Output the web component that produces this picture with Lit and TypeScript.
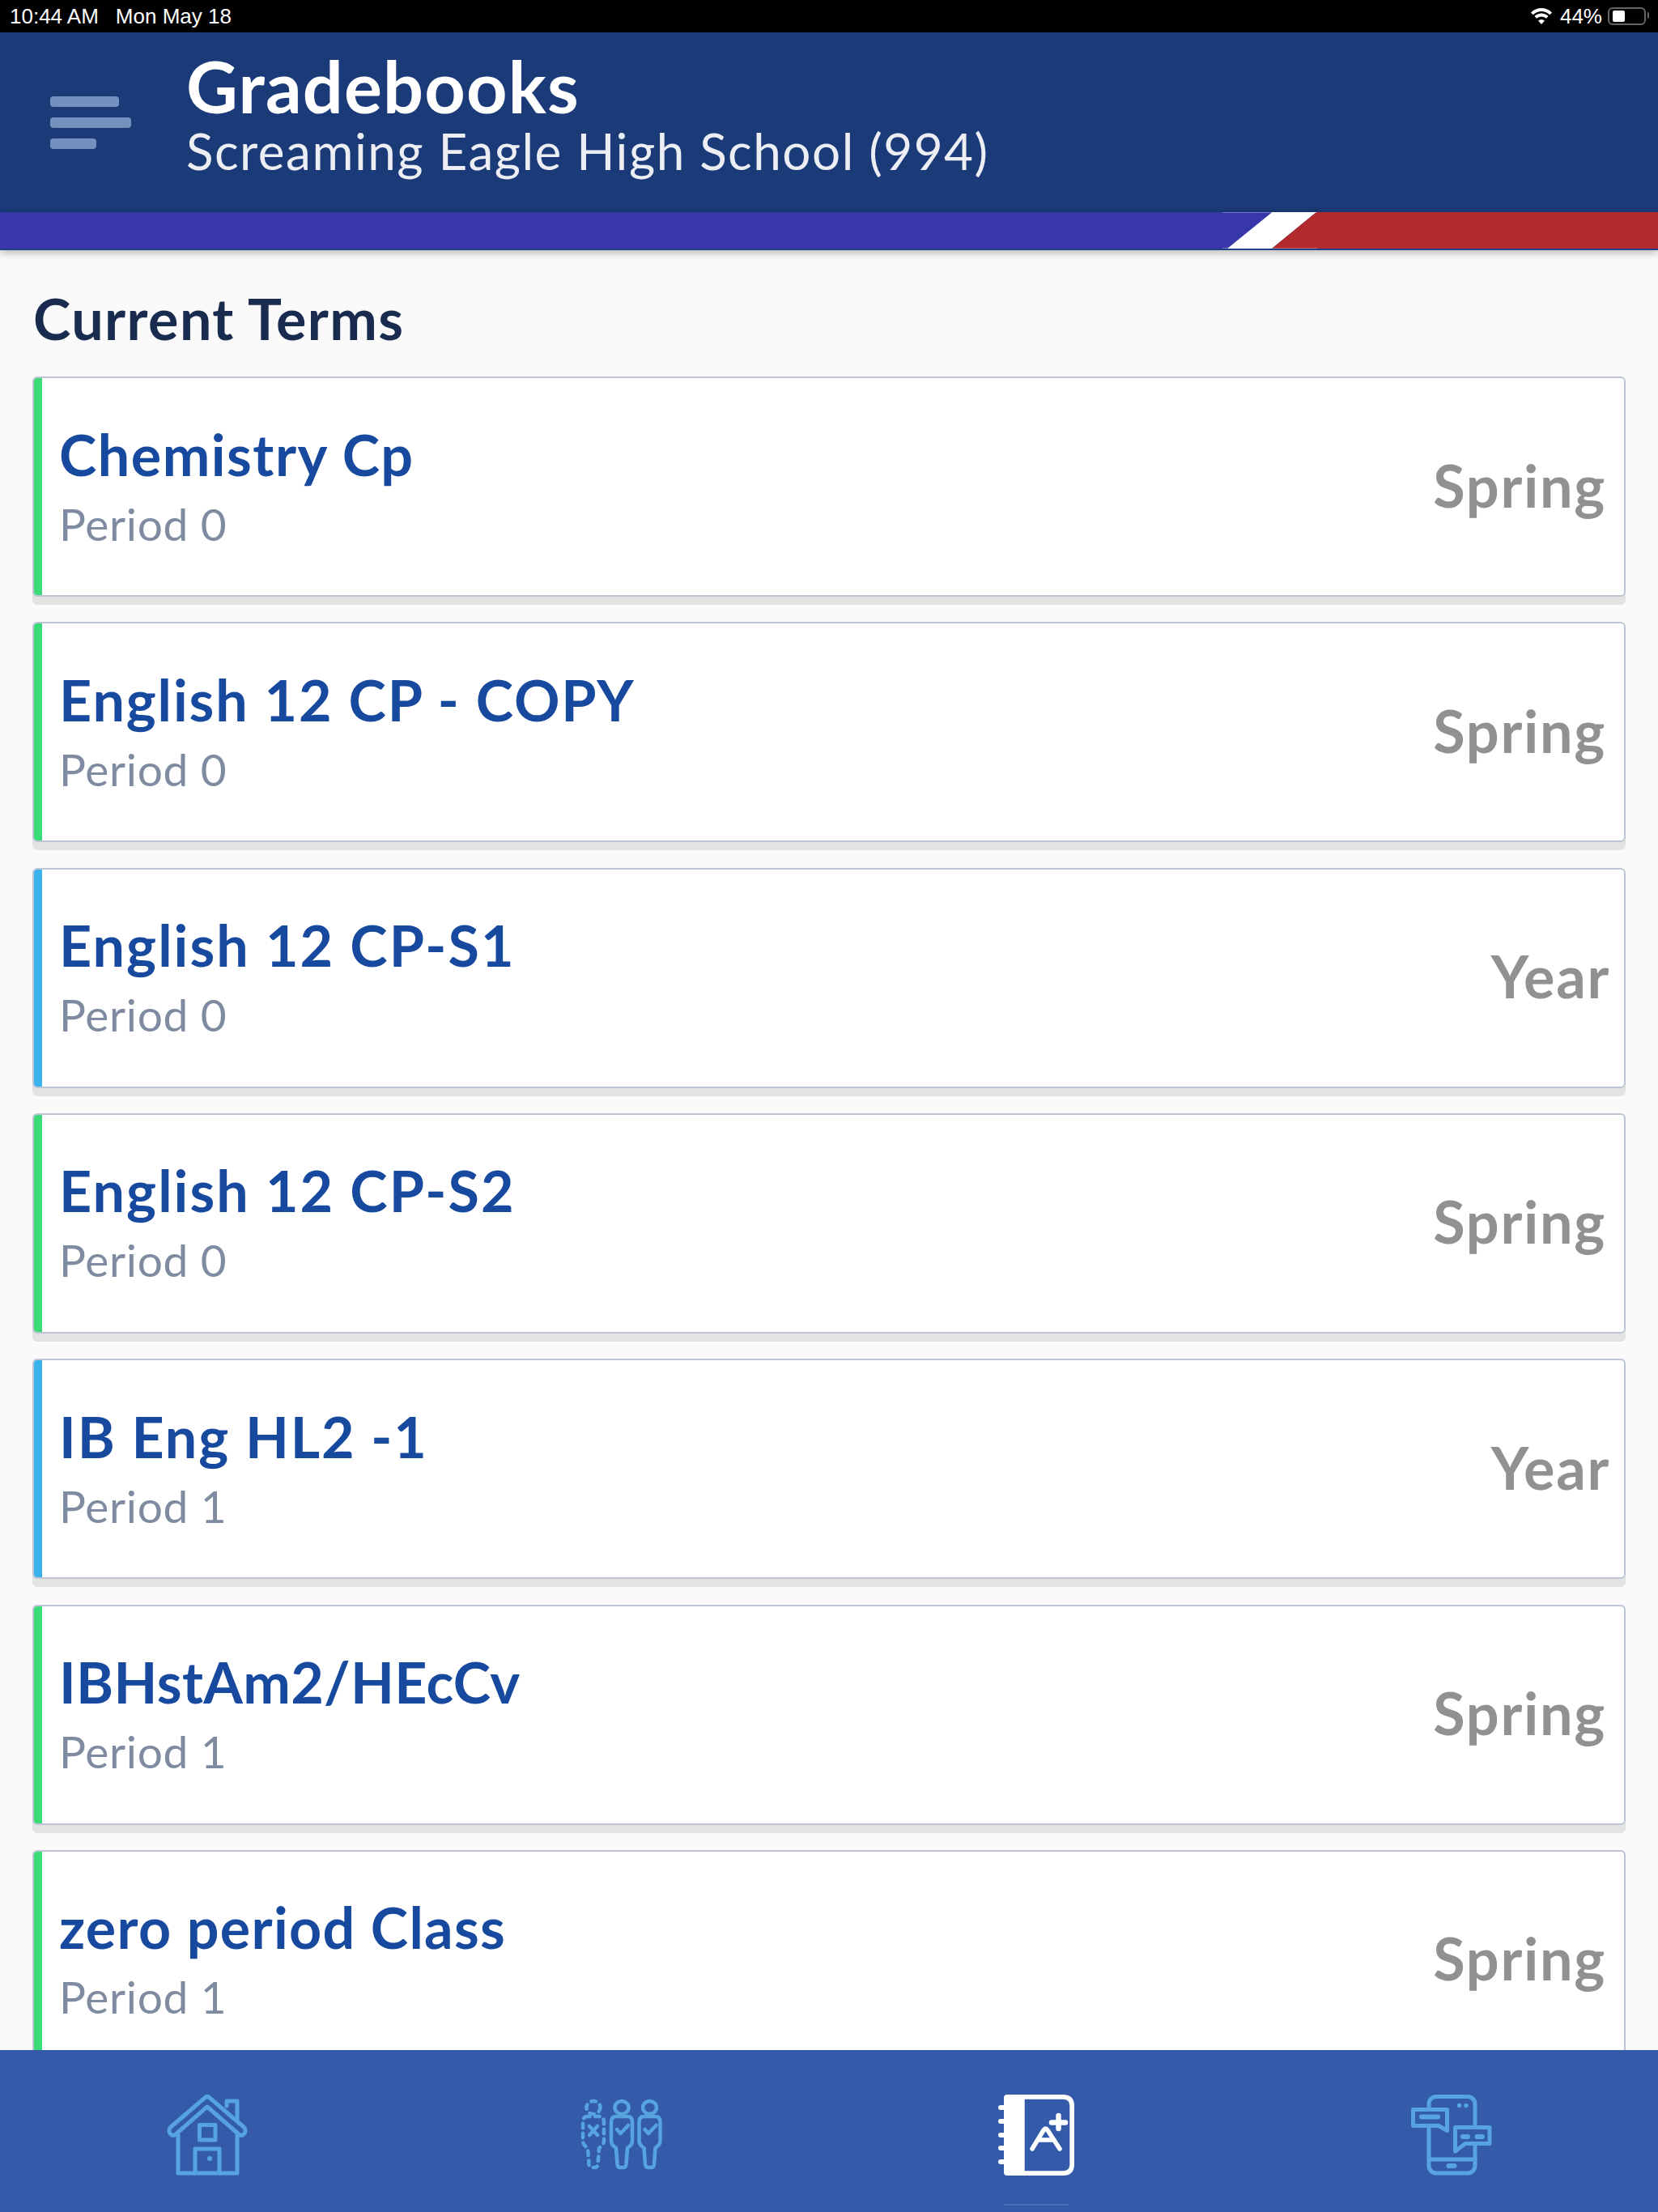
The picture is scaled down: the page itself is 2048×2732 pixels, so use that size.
import { LitElement, html, css, svg } from "lit";
import { customElement } from "lit/decorators.js";

const rows = [
  { name: "Chemistry Cp", track: 1.5, period: "Period 0", term: "Spring", kind: "spring" },
  { name: "English 12 CP - COPY", track: 1.9, period: "Period 0", term: "Spring", kind: "spring" },
  { name: "English 12 CP-S1", track: 2.07, period: "Period 0", term: "Year", kind: "year" },
  { name: "English 12 CP-S2", track: 2.07, period: "Period 0", term: "Spring", kind: "spring" },
  { name: "IB Eng HL2 -1", track: 1.87, period: "Period 1", term: "Year", kind: "year" },
  { name: "IBHstAm2/HEcCv", track: 0.33, period: "Period 1", term: "Spring", kind: "spring" },
  { name: "zero period Class", track: 1.3, period: "Period 1", term: "Spring", kind: "spring" },
];

const person = (dx: number) => svg`
  <g transform="translate(${dx} 0)">
    <ellipse cx="60" cy="26" rx="8.500" ry="8"/>
    <path d="M53 37 Q47 37 47 44 V67 Q47 72 53 76 L54.500 96 Q55 100 58 100 H62 Q65 100 65.500 96 L67 76 Q73 72 73 67 V44 Q73 37 67 37 Z"/>
  </g>`;

const iconHome = html`<svg class="icon" viewBox="0 0 120 120">
  <path d="M57 14 L15 50 Q10.500 55 15 59 Q18 62 21 59 L60 25 L99 59 Q102 62 105 59 Q109.500 55 105 50 L63 14 Q60 11 57 14 Z"/>
  <path d="M84 24 V18 H97 V41"/>
  <path d="M24 60 V107 H97 V60"/>
  <rect x="50.500" y="47.500" width="19.500" height="18.500"/>
  <path d="M45 107 V77 H75 V107"/>
  <circle class="solid" cx="63" cy="89" r="3"/>
</svg>`;

const iconPeople = html`<svg class="icon thin" viewBox="0 0 120 120">
  <g stroke-dasharray="5.500 6.500">${person(-35)}</g>
  <path d="M20 49 L30 60 M30 49 L20 60"/>
  ${person(0)}
  ${person(34.5)}
  <path d="M54 53 L58.500 58 L68 48"/>
  <path d="M88.500 53 L93 58 L102.500 48"/>
</svg>`;

const iconBook = html`<svg class="icon book" viewBox="0 0 120 120">
  <path fill-rule="evenodd" d="M24 10 H93 Q107 10 107 24 V96 Q107 110 93 110 H24 Q20 110 20 106 V14 Q20 10 24 10 Z M45.700 15.700 V104.300 H93 Q101.300 104.300 101.300 96 V24 Q101.300 15.700 93 15.700 Z"/>
  <g class="rings">
    <path d="M16 26 H21 M16 43 H21 M16 60 H21 M16 76 H21 M16 93 H21"/>
  </g>
  <path class="line" d="M55 77 L69 54 Q71.500 50 74 54 L89 77 M62 66 H82"/>
  <path class="line plus" d="M87.500 36 V52 M79 44.500 H96"/>
</svg>`;

const iconPhone = html`<svg class="icon" viewBox="0 0 120 120">
  <rect x="33" y="12.500" width="57" height="94.500" rx="9"/>
  <path d="M33 90 H90"/>
  <path class="fat" d="M57.500 98 H64.500"/>
  <circle class="solid" cx="70.500" cy="23.500" r="2.800"/>
  <circle class="solid" cx="79" cy="23.500" r="2.800"/>
  <path class="bg" d="M13.500 28.500 H55.500 V54.500 L45 48.500 H13.500 Z"/>
  <path class="fat" d="M24 37.500 H44"/>
  <path class="bg" d="M65.500 50.500 H108 V70.500 H78 L65.500 80 Z"/>
  <path class="fat" d="M75 62 H81 M92.500 62 H99"/>
</svg>`;

@customElement("app-root")
export class AppRoot extends LitElement {
  static styles = css`
    :host {
      display: flex;
      flex-direction: column;
      height: 2732px;
      overflow: hidden;
      background: #fafafa;
      font-family: "Lato", "Noto Sans", sans-serif;
    }
    .status {
      height: 40px;
      flex: none;
      background: #000;
      color: #fff;
      display: flex;
      align-items: center;
      justify-content: space-between;
      padding: 0 11px 0 12px;
      font: 26px "Liberation Sans", sans-serif;
    }
    .status-left { display: flex; gap: 21px; }
    .status-right { display: flex; align-items: center; gap: 7px; }
    .wifi { width: 26px; height: 20px; display: block; margin-right: 3px; }
    .battery {
      position: relative;
      width: 47px;
      height: 22px;
      box-sizing: border-box;
      border: 2px solid #666;
      border-radius: 6px;
      padding: 2px 4px;
      margin-right: 4px;
    }
    .battery::before {
      content: "";
      display: block;
      width: 15px;
      height: 14px;
      background: #fff;
      border-radius: 2px;
    }
    .battery::after {
      content: "";
      position: absolute;
      right: -6px;
      top: 4px;
      width: 2px;
      height: 8px;
      background: #666;
      border-radius: 0 2px 2px 0;
    }
    .header {
      height: 222px;
      flex: none;
      box-sizing: border-box;
      background: #1a3a78;
      display: flex;
      align-items: flex-start;
      padding: 20px 0 0 62px;
    }
    .menu {
      width: 168px;
      flex: none;
      display: flex;
      flex-direction: column;
      gap: 13px;
      padding-top: 59px;
    }
    .menu i { display: block; height: 13px; background: #7390bf; border-radius: 4px; }
    .menu i:nth-child(1) { width: 85px; }
    .menu i:nth-child(2) { width: 100px; }
    .menu i:nth-child(3) { width: 57px; }
    h1 {
      margin: 0;
      font-size: 88px;
      line-height: 93px;
      letter-spacing: 1.2px;
      font-weight: 700;
      color: #fff;
    }
    .sub {
      font-size: 62px;
      line-height: 66px;
      letter-spacing: 1.5px;
      font-weight: 400;
      color: #eceef4;
    }
    .stripe {
      flex: none;
      position: relative;
      z-index: 1;
      background: #3737a9;
      border-bottom: 2px solid #1f4286;
      box-shadow: 0 3px 10px rgba(0, 0, 0, 0.28);
    }
    .stripe svg { display: block; }
    main {
      flex: 1;
      min-height: 0;
      overflow: hidden;
      padding: 0 40px;
    }
    h2 {
      margin: 0;
      padding: 45px 0 0 1px;
      height: 156px;
      box-sizing: border-box;
      font-size: 70px;
      line-height: 78px;
      letter-spacing: 1.4px;
      font-weight: 700;
      color: #192b4f;
    }
    .card {
      height: 272px;
      margin-bottom: 31.33px;
      box-sizing: border-box;
      background: #fff;
      border: 2px solid #bdc5d4;
      border-radius: 6px;
      box-shadow: 0 10px 0 rgba(0, 0, 0, 0.09);
      display: flex;
      align-items: center;
      justify-content: space-between;
      overflow: hidden;
    }
    .bar { width: 10px; align-self: stretch; flex: none; }
    .spring .bar { background: #3bdb78; }
    .year .bar { background: #3bb2ea; }
    .info { flex: 1; padding-left: 21px; margin-top: -6px; }
    .name { font-size: 70px; line-height: 88px; font-weight: 700; color: #174a9f; }
    .period { font-size: 55px; line-height: 66px; letter-spacing: 0.7px; color: #7e8ba0; margin-top: 9px; }
    .term {
      font-size: 72px;
      letter-spacing: 1.7px;
      font-weight: 700;
      color: #919191;
      padding-right: 22px;
      margin-top: -5px;
    }
    .year .term { padding-right: 17px; }
    .tabs {
      height: 200px;
      flex: none;
      background: #335ba9;
      display: grid;
      grid-template-columns: repeat(4, 1fr);
      position: relative;
    }
    .tab {
      display: flex;
      flex-direction: column;
      align-items: center;
      padding-top: 45px;
    }
    .icon {
      width: 120px;
      height: 120px;
      display: block;
      fill: none;
      stroke: #56a3e0;
      stroke-width: 5;
      stroke-linecap: round;
      stroke-linejoin: round;
    }
    .icon.thin { stroke-width: 4.5; }
    .icon .solid { fill: #56a3e0; stroke: none; }
    .icon .fat { stroke-width: 6; }
    .icon .bg { fill: #335ba9; }
    .icon.book { fill: #fff; stroke: none; }
    .icon.book .rings path, .icon.book .line {
      fill: none;
      stroke: #fff;
      stroke-linecap: round;
      stroke-linejoin: round;
    }
    .icon.book .rings path { stroke-width: 6; }
    .icon.book .line { stroke-width: 5.5; }
    .icon.book .plus { stroke-width: 6.5; }
    .indicator {
      width: 80px;
      height: 2px;
      margin-top: 25px;
      background: rgba(255, 255, 255, 0.13);
    }
  `;

  render() {
    return html`
      <div class="status">
        <div class="status-left"><span>10:44 AM</span><span>Mon May 18</span></div>
        <div class="status-right">
          <svg class="wifi" viewBox="0 0 26 20">
            <path d="M13 20 L9 15.500 Q13 12.500 17 15.500 Z M13 6.500 Q18 6.500 21.500 10 L19 12.800 Q13 8 7 12.800 L4.500 10 Q8 6.500 13 6.500 Z M13 0 Q20.500 0 26 5.500 L23.500 8.300 Q13 -0.500 2.500 8.300 L0 5.500 Q5.500 0 13 0 Z" fill="#fff"/>
          </svg>
          <span>44%</span>
          <div class="battery"></div>
        </div>
      </div>
      <header class="header">
        <div class="menu"><i></i><i></i><i></i></div>
        <div>
          <h1>Gradebooks</h1>
          <div class="sub">Screaming Eagle High School (994)</div>
        </div>
      </header>
      <div class="stripe">
        <svg width="2048" height="45" viewBox="0 0 2048 45">
          <polygon points="1571.500,0 1626,0 1571,45 1516,45" fill="#fff"/>
          <polygon points="1626,0 2048,0 2048,45 1571,45" fill="#b22a2c"/>
          <path d="M1510 0.500 H1627 M1510 44.500 H1627" stroke="#fff" stroke-opacity="0.3" stroke-width="1"/>
        </svg>
      </div>
      <main>
        <h2>Current Terms</h2>
        ${rows.map(
          (r) => html`
            <div class="card ${r.kind}">
              <div class="bar"></div>
              <div class="info">
                <div class="name" style="letter-spacing:${r.track}px">${r.name}</div>
                <div class="period">${r.period}</div>
              </div>
              <div class="term">${r.term}</div>
            </div>
          `
        )}
      </main>
      <nav class="tabs">
        <div class="tab">${iconHome}</div>
        <div class="tab">${iconPeople}</div>
        <div class="tab">${iconBook}<div class="indicator"></div></div>
        <div class="tab">${iconPhone}</div>
      </nav>
    `;
  }
}
